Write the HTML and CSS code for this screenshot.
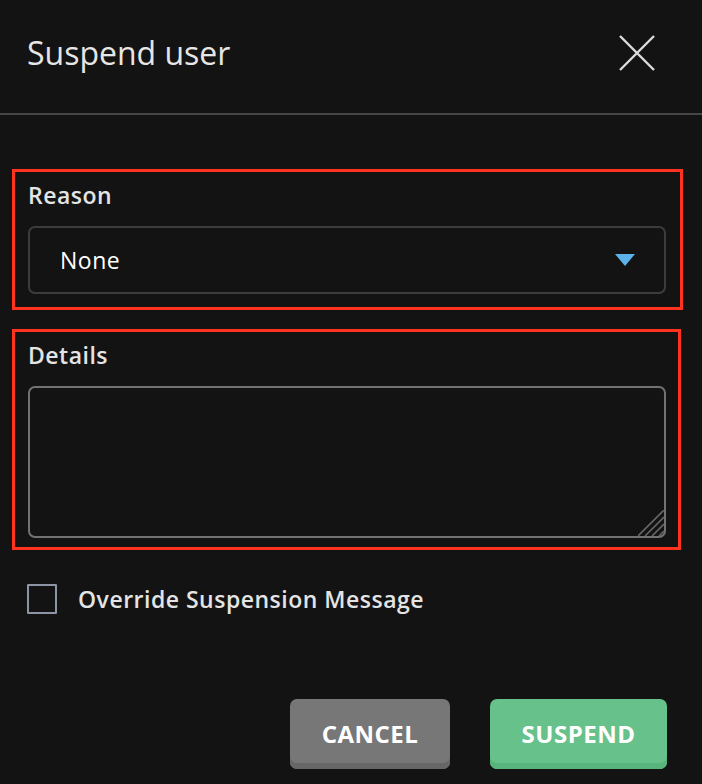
FILE: index.html
```html
<!DOCTYPE html>
<html lang="en">
<head>
<meta charset="utf-8">
<title>Suspend user</title>
<link rel="stylesheet" href="styles.css">
</head>
<body>
<div class="modal">
  <header class="modal-header">
    <h1 class="modal-title">Suspend user</h1>
    <button class="close-btn" aria-label="Close">
      <svg width="36" height="36" viewBox="0 0 36 36"><path d="M1 1 L35 35 M35 1 L1 35" stroke="#dcdcdc" stroke-width="2.4" fill="none"/></svg>
    </button>
  </header>
  <div class="modal-body">
    <div class="field field-reason">
      <label class="field-label">Reason</label>
      <div class="select">
        <span class="select-value">None</span>
        <svg class="select-caret" width="20" height="12" viewBox="0 0 20 12"><path d="M0 0 H20 L10 12 Z" fill="#5cb3ea"/></svg>
      </div>
    </div>
    <div class="field field-details">
      <label class="field-label">Details</label>
      <div class="textarea-wrap">
        <textarea class="textarea"></textarea>
        <svg class="resize-grip" width="26" height="26" viewBox="0 0 26 26"><path d="M0 26 L26 0 M7 26 L26 7 M14 26 L26 14 M21 26 L26 21" stroke="#666666" stroke-width="1.6" fill="none"/></svg>
      </div>
    </div>
    <label class="check-row">
      <span class="checkbox"></span>
      <span class="check-label">Override Suspension Message</span>
    </label>
  </div>
  <footer class="modal-footer">
    <button class="btn btn-cancel">CANCEL</button>
    <button class="btn btn-suspend">SUSPEND</button>
  </footer>
</div>
</body>
</html>
```
FILE: styles.css
```css
* { box-sizing: border-box; }
html, body {
  margin: 0;
  background: #131313;
  font-family: "Open Sans", "Noto Sans", sans-serif;
  color: #e6e6e6;
}
.modal {
  width: 702px;
  height: 784px;
  display: flex;
  flex-direction: column;
}
.modal-header {
  height: 115px;
  display: flex;
  align-items: center;
  justify-content: space-between;
  padding: 0 47px 8px 27px;
  border-bottom: 2px solid #464646;
}
.modal-title {
  margin: 0;
  font-size: 32px;
  font-weight: 400;
  line-height: 40px;
  color: #e6e6e6;
}
.close-btn {
  background: none;
  border: 0;
  padding: 0;
  width: 36px;
  height: 36px;
  display: block;
}
.close-btn svg { display: block; }
.modal-body {
  padding: 54px 0 0 0;
  display: flex;
  flex-direction: column;
}
.field {
  border: 3px solid #ff3320;
  margin-left: 12px;
  display: flex;
  flex-direction: column;
}
.field-reason {
  width: 671px;
  padding: 8px 14px 13px 13px;
}
.field-details {
  width: 669px;
  margin-top: 19px;
  padding: 8px 12px 9px 13px;
}
.field-label {
  font-size: 23px;
  font-weight: 600;
  letter-spacing: 0.5px;
  line-height: 30px;
  color: #e4e4e4;
  margin-bottom: 16px;
}
.select {
  height: 68px;
  border: 2px solid #3c3c3c;
  border-radius: 7px;
  display: flex;
  align-items: center;
  justify-content: space-between;
  padding: 0 29px 0 30px;
}
.select-value {
  font-size: 23px;
  letter-spacing: 0.5px;
  color: #ffffff;
}
.select-caret { display: block; }
.textarea-wrap {
  position: relative;
  height: 152px;
}
.textarea {
  height: 152px;
  width: 100%;
  background: #131313;
  border: 2px solid #727272;
  border-radius: 7px;
  color: #fff;
  font-family: inherit;
  font-size: 20px;
  resize: none;
  outline: none;
  display: block;
}
.resize-grip {
  position: absolute;
  right: 2px;
  bottom: 2px;
  display: block;
  pointer-events: none;
}
.check-row {
  margin: 34px 0 0 27px;
  height: 30px;
  display: flex;
  align-items: center;
  gap: 21px;
}
.checkbox {
  width: 30px;
  height: 30px;
  border: 2px solid #8d95a5;
  border-radius: 1px;
}
.check-label {
  font-size: 23px;
  font-weight: 600;
  letter-spacing: 0.5px;
  line-height: 30px;
  color: #e4e4e4;
}
.modal-footer {
  margin-top: 85px;
  display: flex;
  justify-content: flex-end;
  gap: 40px;
  padding-right: 35px;
}
.btn {
  height: 70px;
  border: 0;
  border-radius: 7px;
  font-family: inherit;
  font-size: 24px;
  font-weight: 700;
  letter-spacing: 0.5px;
  color: #ffffff;
  padding: 0 0 2px 0;
}
.btn-cancel {
  width: 160px;
  background: #777777;
  box-shadow: inset 0 -6px 0 #676767;
}
.btn-suspend {
  width: 177px;
  background: #66c18b;
  box-shadow: inset 0 -6px 0 #57b57b;
}
```
